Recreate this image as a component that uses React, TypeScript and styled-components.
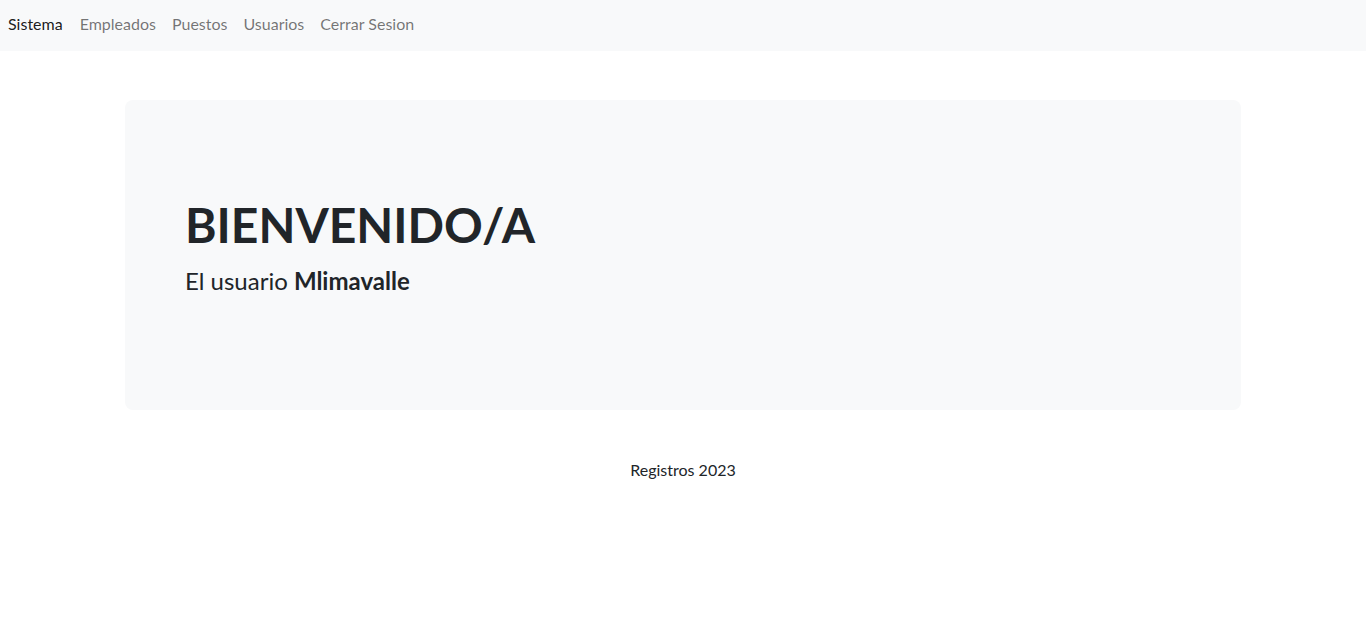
import React from "react";
import styled, { createGlobalStyle } from "styled-components";

const GlobalStyle = createGlobalStyle`
  html, body { margin: 0; padding: 0; }
  body {
    font-family: "Segoe UI", Lato, "Noto Sans", "Liberation Sans", sans-serif;
    font-size: 16px;
    line-height: 1.5;
    color: #212529;
    background: #ffffff;
  }
  * { box-sizing: border-box; }
`;

const Navbar = styled.nav`
  height: 51px;
  background: #f8f9fa;
  display: flex;
  align-items: center;
  padding: 0 8px 4px;
`;

const NavList = styled.ul`
  display: flex;
  align-items: center;
  gap: 16px;
  list-style: none;
  margin: 0;
  padding: 0;
`;

const NavLink = styled.a<{ $active?: boolean }>`
  font-size: 16px;
  line-height: 24px;
  text-decoration: none;
  color: ${(p) => (p.$active ? "rgba(0,0,0,0.9)" : "rgba(0,0,0,0.55)")};
  margin-right: ${(p) => (p.$active ? "1px" : "0")};
  cursor: pointer;
`;

const Container = styled.main`
  max-width: 1140px;
  margin: 0 auto;
  padding: 0 12px;
`;

const Jumbotron = styled.section`
  margin-top: 49px;
  background: #f8f9fa;
  border-radius: 8px;
  padding: 96px 60px;
`;

const Title = styled.h1`
  margin: 0 0 9px;
  font-size: 48px;
  line-height: 1.2;
  font-weight: 700;
`;

const Lead = styled.p`
  margin: 0 0 15px;
  font-size: 24px;
  line-height: 1.5;
  font-weight: 400;

  strong { font-weight: 700; }
`;

const Footer = styled.footer`
  padding-top: 48px;
  text-align: center;
  font-size: 16px;
  line-height: 24px;
`;

export default function App() {
  return (
    <>
      <GlobalStyle />
      <Navbar>
        <NavList>
          <li><NavLink $active>Sistema</NavLink></li>
          <li><NavLink>Empleados</NavLink></li>
          <li><NavLink>Puestos</NavLink></li>
          <li><NavLink>Usuarios</NavLink></li>
          <li><NavLink>Cerrar Sesion</NavLink></li>
        </NavList>
      </Navbar>
      <Container>
        <Jumbotron>
          <Title>BIENVENIDO/A</Title>
          <Lead>
            El usuario <strong>Mlimavalle</strong>
          </Lead>
        </Jumbotron>
        <Footer>Registros 2023</Footer>
      </Container>
    </>
  );
}
